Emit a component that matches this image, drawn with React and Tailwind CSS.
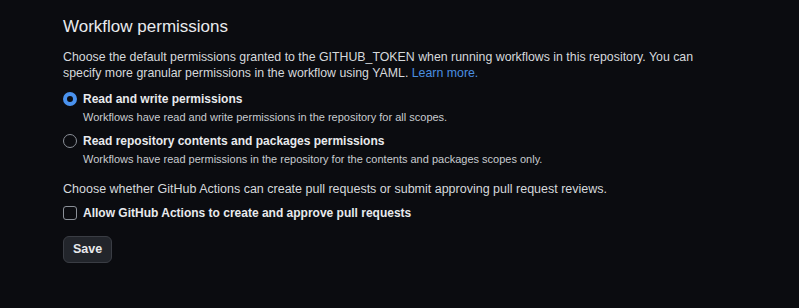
export default function App() {
  return (
    <div className="w-[799px] h-[308px] bg-[#0b0c10] text-[#e6e8eb] overflow-hidden" style={{ fontFamily: '"Liberation Sans", Arial, sans-serif' }}>
      <div className="pl-[63px] pt-[14px]">
        <h2 className="text-[17px] leading-[26px] text-[#e8eaed]">Workflow permissions</h2>
        <p className="mt-[9px] text-[12.35px] leading-[16px] text-[#d6d9dc] w-[660px]">
          Choose the default permissions granted to the GITHUB_TOKEN when running workflows in this repository. You can specify more granular permissions in the workflow using YAML. <span className="text-[#4a8fe0]">Learn more.</span>
        </p>
        <div className="mt-[9px] flex flex-col gap-[6px]">
          <div>
            <div className="flex items-center gap-[6px]">
              <span className="w-[14px] h-[14px] rounded-full border-[4px] border-[#4a92ee] bg-[#0b0c10]"></span>
              <span className="text-[12px] leading-[18px] font-bold text-[#e8eaed]">Read and write permissions</span>
            </div>
            <div className="pl-[20px] text-[11px] leading-[18px] text-[#c8cbcf]">Workflows have read and write permissions in the repository for all scopes.</div>
          </div>
          <div>
            <div className="flex items-center gap-[6px]">
              <span className="w-[14px] h-[14px] rounded-full border border-[#8b9098] bg-[#0b0c10]"></span>
              <span className="text-[12px] leading-[18px] font-bold text-[#e8eaed]">Read repository contents and packages permissions</span>
            </div>
            <div className="pl-[20px] text-[11px] leading-[18px] text-[#c8cbcf]">Workflows have read permissions in the repository for the contents and packages scopes only.</div>
          </div>
        </div>
        <p className="mt-[12px] text-[12.5px] leading-[18px] text-[#d6d9dc]">Choose whether GitHub Actions can create pull requests or submit approving pull request reviews.</p>
        <div className="mt-[6px] flex items-center gap-[6px]">
          <span className="w-[14px] h-[14px] rounded-[3px] border border-[#8b9098] bg-[#0b0c10]"></span>
          <span className="text-[12px] leading-[18px] font-bold text-[#e8eaed]">Allow GitHub Actions to create and approve pull requests</span>
        </div>
        <button className="mt-[14px] w-[49px] h-[27px] rounded-[6px] border border-[#3a3d44] bg-[#22252b] text-[12.5px] font-bold text-[#e8eaed]">Save</button>
      </div>
    </div>
  );
}
